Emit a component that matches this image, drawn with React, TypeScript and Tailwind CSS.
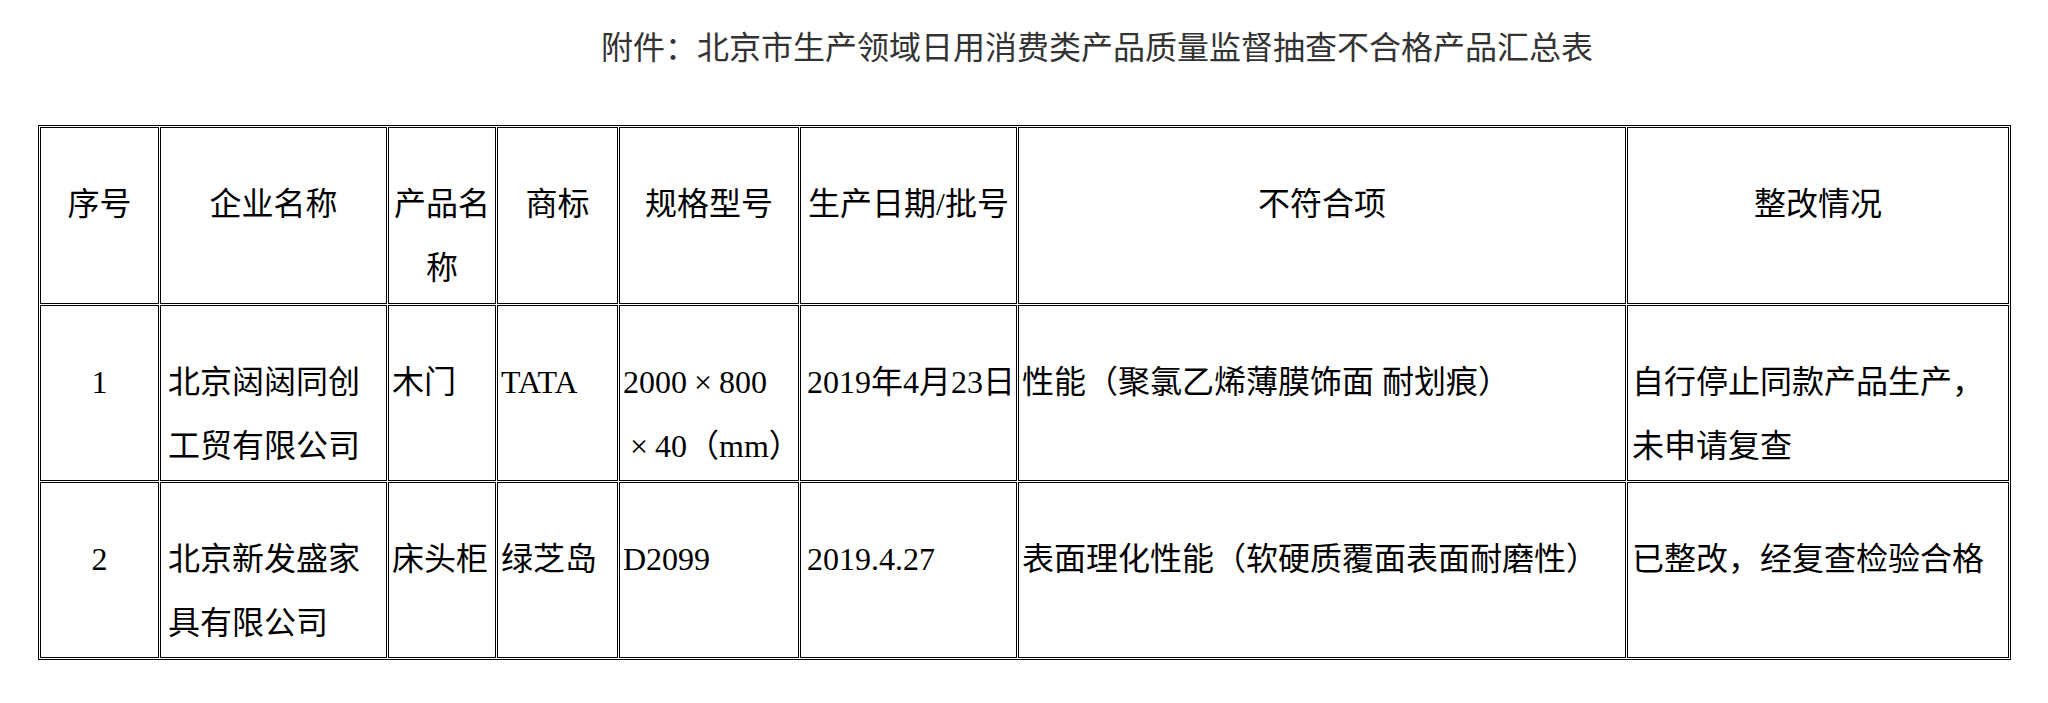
import React from 'react'

const headers = ['序号', '企业名称', '产品名称', '商标', '规格型号', '生产日期/批号', '不符合项', '整改情况']
const widths = ['w-[119px]', 'w-[227px]', 'w-[108px]', 'w-[121px]', 'w-[180px]', 'w-[217px]', 'w-[608px]', 'w-[382px]']

type Row = {
    no: string
    company: string[]
    product: string[]
    brand: string
    spec: React.ReactNode[]
    date: string
    issue: string
    fix: string[]
}

const X = () => <span className="inline-block w-[32px] text-center">×</span>

const rows: Row[] = [
    {
        no: '1',
        company: ['北京闼闼同创', '工贸有限公司'],
        product: ['木门'],
        brand: 'TATA',
        spec: [<>2000<X />800</>, <><X />40（mm）</>],
        date: '2019年4月23日',
        issue: '性能（聚氯乙烯薄膜饰面 耐划痕）',
        fix: ['自行停止同款产品生产，', '未申请复查'],
    },
    {
        no: '2',
        company: ['北京新发盛家', '具有限公司'],
        product: ['床头柜'],
        brand: '绿芝岛',
        spec: ['D2099'],
        date: '2019.4.27',
        issue: '表面理化性能（软硬质覆面表面耐磨性）',
        fix: ['已整改，经复查检验合格'],
    },
]

const Lines = ({lines}: {lines: React.ReactNode[]}) => (
    <>
        {lines.map((l, i) => (
            <div key={i} className="whitespace-nowrap">{l}</div>
        ))}
    </>
)

const cell = "border border-black align-top h-[176px] pt-[44px] pl-[3px] pr-[1px] text-left"

export default function App() {
    return (
        <div className="min-h-[703px] bg-white text-black font-['Liberation_Serif','Noto_Sans_CJK_SC',serif] text-[32px] leading-[64px]">
            <div className="pt-[24px] pl-[601px] leading-[48px] text-[#333] whitespace-nowrap">
                附件：北京市生产领域日用消费类产品质量监督抽查不合格产品汇总表
            </div>
            <div className="mt-[53px] ml-[38px]">
                <table className="w-[1973px] table-fixed border border-black border-separate border-spacing-[1px]">
                    <thead>
                        <tr>
                            {headers.map((h, i) => (
                                <th
                                    key={h}
                                    className={`${widths[i]} border border-black align-top h-[177px] pt-[44px] px-[2px] text-center font-normal`}
                                >
                                    {h}
                                </th>
                            ))}
                        </tr>
                    </thead>
                    <tbody>
                        {rows.map(r => (
                            <tr key={r.no}>
                                <td className="border border-black align-top h-[176px] pt-[44px] text-center">{r.no}</td>
                                <td className={`${cell} pl-[7px]`}><Lines lines={r.company} /></td>
                                <td className={cell}><Lines lines={r.product} /></td>
                                <td className={cell}>{r.brand}</td>
                                <td className={cell}><Lines lines={r.spec} /></td>
                                <td className={`${cell} pl-[6px]`}>{r.date}</td>
                                <td className={cell}>{r.issue}</td>
                                <td className={`${cell} pl-[4px]`}><Lines lines={r.fix} /></td>
                            </tr>
                        ))}
                    </tbody>
                </table>
            </div>
        </div>
    )
}
